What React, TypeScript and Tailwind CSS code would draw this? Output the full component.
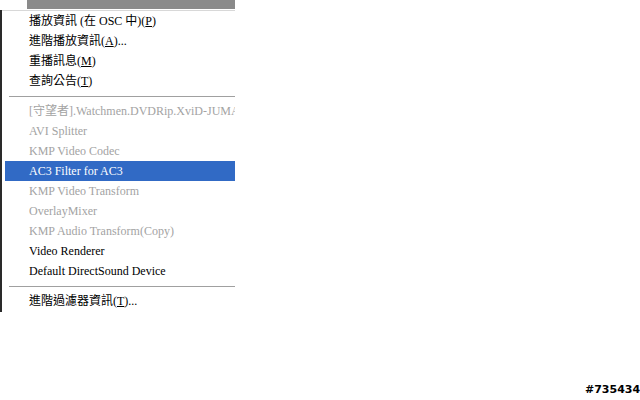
import React from "react";

const cjk = { fontFamily: '"Liberation Serif", "Noto Sans CJK TC", serif' };

type Item = { label: React.ReactNode; disabled?: boolean; active?: boolean };

function U({ c }: { c: string }) {
  return <span className="underline underline-offset-[1px]">{c}</span>;
}

const group1: Item[] = [
  { label: <>播放資訊 (在 OSC 中)(<U c="P" />)</> },
  { label: <>進階播放資訊(<U c="A" />)...</> },
  { label: <>重播訊息(<U c="M" />)</> },
  { label: <>查詢公告(<U c="T" />)</> },
];

const group2: Item[] = [
  { label: "[守望者].Watchmen.DVDRip.XviD-JUMANJI", disabled: true },
  { label: "AVI Splitter", disabled: true },
  { label: "KMP Video Codec", disabled: true },
  { label: "AC3 Filter for AC3", active: true },
  { label: "KMP Video Transform", disabled: true },
  { label: "OverlayMixer", disabled: true },
  { label: "KMP Audio Transform(Copy)", disabled: true },
  { label: "Video Renderer" },
  { label: "Default DirectSound Device" },
];

function Row({ item }: { item: Item }) {
  const color = item.active
    ? "bg-[#316ac5] text-white"
    : item.disabled
    ? "text-[#a3a3a3]"
    : "text-black";
  return (
    <div
      className={`h-[20px] flex items-center pl-[24px] whitespace-nowrap overflow-hidden text-[12px] leading-none ${color}`}
      style={cjk}
    >
      {item.label}
    </div>
  );
}

function Sep() {
  return (
    <div className="h-[10px] pl-[4px] flex flex-col">
      <div className="h-[5px]" />
      <div className="h-px bg-[#a0a0a0]" />
      <div className="h-px bg-white" />
    </div>
  );
}

export default function App() {
  return (
    <div className="w-[640px] h-[400px] bg-white relative overflow-hidden">
      <div className="flex h-[10px]">
        <div className="w-[27px]" />
        <div className="w-[208px] h-[9px] bg-[#8a8a8a]" />
      </div>
      <div className="flex">
        <div className="w-[2px] h-[302px] bg-[#2a2a2a]" />
        <div className="w-[233px] bg-white border-t border-[#d8d8d8] pl-[3px]">
          {group1.map((it, i) => (
            <Row key={i} item={it} />
          ))}
          <Sep />
          {group2.map((it, i) => (
            <Row key={i} item={it} />
          ))}
          <Sep />
          <Row item={{ label: <>進階過濾器資訊(<U c="T" />)...</> }} />
        </div>
      </div>
      <div
        className="absolute left-[585px] top-[384px] text-[11px] font-bold text-black leading-none"
        style={{ fontFamily: '"DejaVu Sans", sans-serif', textShadow: "0 0 1px #fff" }}
      >
        #735434
      </div>
    </div>
  );
}
